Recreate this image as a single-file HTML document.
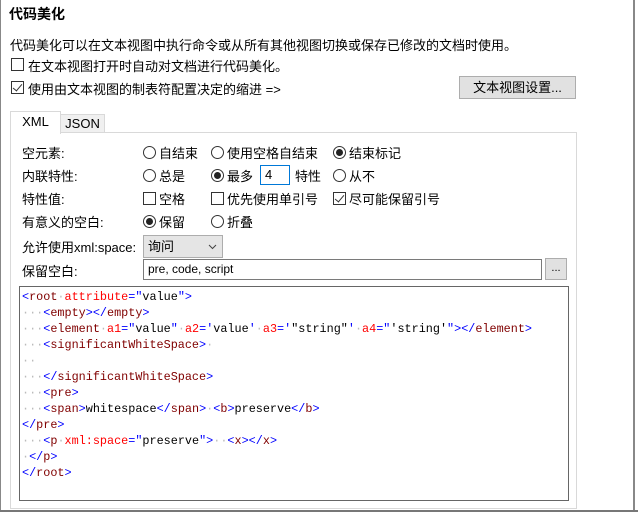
<!DOCTYPE html>
<html><head><meta charset="utf-8"><style>
*{margin:0;padding:0;box-sizing:border-box}
body{width:638px;height:512px;background:#fff;position:relative;overflow:hidden;font-family:"Liberation Sans","Noto Sans CJK SC",sans-serif;font-size:13px;color:#000}
.a{position:absolute;white-space:nowrap}
.cb{position:absolute;width:13px;height:13px;border:1px solid #333;background:#fff}
.rd{position:absolute;width:13px;height:13px;border:1px solid #333;border-radius:50%;background:#fff}
.rd.on::after{content:"";position:absolute;left:2px;top:2px;width:7px;height:7px;border-radius:50%;background:#222}
.chk::after{content:"";position:absolute;left:3px;top:0px;width:4px;height:8px;border:solid #333;border-width:0 1.3px 1.3px 0;transform:rotate(40deg)}
.code{position:absolute;left:19px;top:286px;width:550px;height:215px;border:1px solid #666;font-family:"Liberation Mono",monospace;font-size:11.8px;line-height:16px;padding:2px 0 0 2px;white-space:pre}
.t{color:#00f}.n{color:#800000}.at{color:#f00}.d{color:#bbb}
</style></head><body>
<div class="a" style="left:0;top:0;width:1px;height:512px;background:#888"></div>
<div class="a" style="left:633px;top:0;width:2px;height:512px;background:#888"></div>
<div class="a" style="left:0;top:510px;width:638px;height:2px;background:#777"></div>
<div class="a" style="left:9px;top:4px;font-weight:bold;font-size:14px">代码美化</div>
<div class="a" style="left:10px;top:35px">代码美化可以在文本视图中执行命令或从所有其他视图切换或保存已修改的文档时使用。</div>
<div class="cb" style="left:11px;top:58px"></div><div class="a" style="left:28px;top:56px">在文本视图打开时自动对文档进行代码美化。</div>
<div class="cb chk" style="left:11px;top:81px"></div><div class="a" style="left:28px;top:79px">使用由文本视图的制表符配置决定的缩进 =&gt;</div>
<div class="a" style="left:459px;top:76px;width:117px;height:23px;background:#e1e1e1;border:1px solid #adadad;text-align:center;line-height:21px">文本视图设置...</div>
<div class="a" style="left:10px;top:132px;width:567px;height:377px;border:1px solid #d9d9d9"></div>
<div class="a" style="left:60px;top:114px;width:45px;height:19px;background:#f0f0f0;border:1px solid #d9d9d9;text-align:center;line-height:18px">JSON</div>
<div class="a" style="left:10px;top:111px;width:51px;height:23px;background:#fff;border:1px solid #d9d9d9;border-bottom:none;text-align:center;line-height:20px">XML</div>
<div class="a" style="left:22px;top:143px">空元素:</div>
<div class="rd" style="left:143px;top:146px"></div><div class="a" style="left:159px;top:143px">自结束</div>
<div class="rd" style="left:211px;top:146px"></div><div class="a" style="left:227px;top:143px">使用空格自结束</div>
<div class="rd on" style="left:333px;top:146px"></div><div class="a" style="left:349px;top:143px">结束标记</div>
<div class="a" style="left:22px;top:166px">内联特性:</div>
<div class="rd" style="left:143px;top:169px"></div><div class="a" style="left:159px;top:166px">总是</div>
<div class="rd on" style="left:211px;top:169px"></div><div class="a" style="left:227px;top:166px">最多</div>
<div class="a" style="left:260px;top:165px;width:30px;height:20px;border:1px solid #0078d7;padding-left:4px;line-height:18px">4</div>
<div class="a" style="left:295px;top:166px">特性</div>
<div class="rd" style="left:333px;top:169px"></div><div class="a" style="left:349px;top:166px">从不</div>
<div class="a" style="left:22px;top:189px">特性值:</div>
<div class="cb" style="left:143px;top:192px"></div><div class="a" style="left:159px;top:189px">空格</div>
<div class="cb" style="left:211px;top:192px"></div><div class="a" style="left:227px;top:189px">优先使用单引号</div>
<div class="cb chk" style="left:333px;top:192px"></div><div class="a" style="left:349px;top:189px">尽可能保留引号</div>
<div class="a" style="left:22px;top:212px">有意义的空白:</div>
<div class="rd on" style="left:143px;top:215px"></div><div class="a" style="left:159px;top:212px">保留</div>
<div class="rd" style="left:211px;top:215px"></div><div class="a" style="left:227px;top:212px">折叠</div>
<div class="a" style="left:22px;top:237px">允许使用xml:space:</div>
<div class="a" style="left:143px;top:235px;width:80px;height:23px;background:#e5e5e5;border:1px solid #adadad;padding-left:4px;line-height:21px">询问<svg style="position:absolute;left:64px;top:8px" width="9" height="6"><path d="M1 1L4.5 4.5L8 1" fill="none" stroke="#444" stroke-width="1"/></svg></div>
<div class="a" style="left:22px;top:261px">保留空白:</div>
<div class="a" style="left:143px;top:259px;width:399px;height:21px;border:1px solid #7a7a7a;padding-left:4px;line-height:19px;font-size:12px">pre, code, script</div>
<div class="a" style="left:545px;top:258px;width:22px;height:22px;background:#e1e1e1;border:1px solid #adadad;text-align:center;line-height:18px;font-size:11px">...</div>
<div class="code"><span class="t">&lt;</span><span class="n">root</span><span class="d">·</span><span class="at">attribute</span><span class="t">="</span>value<span class="t">"&gt;</span>
<span class="d">···</span><span class="t">&lt;</span><span class="n">empty</span><span class="t">&gt;&lt;/</span><span class="n">empty</span><span class="t">&gt;</span>
<span class="d">···</span><span class="t">&lt;</span><span class="n">element</span><span class="d">·</span><span class="at">a1</span><span class="t">="</span>value<span class="t">"</span><span class="d">·</span><span class="at">a2</span><span class="t">='</span>value<span class="t">'</span><span class="d">·</span><span class="at">a3</span><span class="t">='</span>"string"<span class="t">'</span><span class="d">·</span><span class="at">a4</span><span class="t">="</span>'string'<span class="t">"&gt;&lt;/</span><span class="n">element</span><span class="t">&gt;</span>
<span class="d">···</span><span class="t">&lt;</span><span class="n">significantWhiteSpace</span><span class="t">&gt;</span><span class="d">·</span>
<span class="d">··</span>
<span class="d">···</span><span class="t">&lt;/</span><span class="n">significantWhiteSpace</span><span class="t">&gt;</span>
<span class="d">···</span><span class="t">&lt;</span><span class="n">pre</span><span class="t">&gt;</span>
<span class="d">···</span><span class="t">&lt;</span><span class="n">span</span><span class="t">&gt;</span>whitespace<span class="t">&lt;/</span><span class="n">span</span><span class="t">&gt;</span><span class="d">·</span><span class="t">&lt;</span><span class="n">b</span><span class="t">&gt;</span>preserve<span class="t">&lt;/</span><span class="n">b</span><span class="t">&gt;</span>
<span class="t">&lt;/</span><span class="n">pre</span><span class="t">&gt;</span>
<span class="d">···</span><span class="t">&lt;</span><span class="n">p</span><span class="d">·</span><span class="at">xml:space</span><span class="t">="</span>preserve<span class="t">"&gt;</span><span class="d">··</span><span class="t">&lt;</span><span class="n">x</span><span class="t">&gt;&lt;/</span><span class="n">x</span><span class="t">&gt;</span>
<span class="d">·</span><span class="t">&lt;/</span><span class="n">p</span><span class="t">&gt;</span>
<span class="t">&lt;/</span><span class="n">root</span><span class="t">&gt;</span></div>
</body></html>
